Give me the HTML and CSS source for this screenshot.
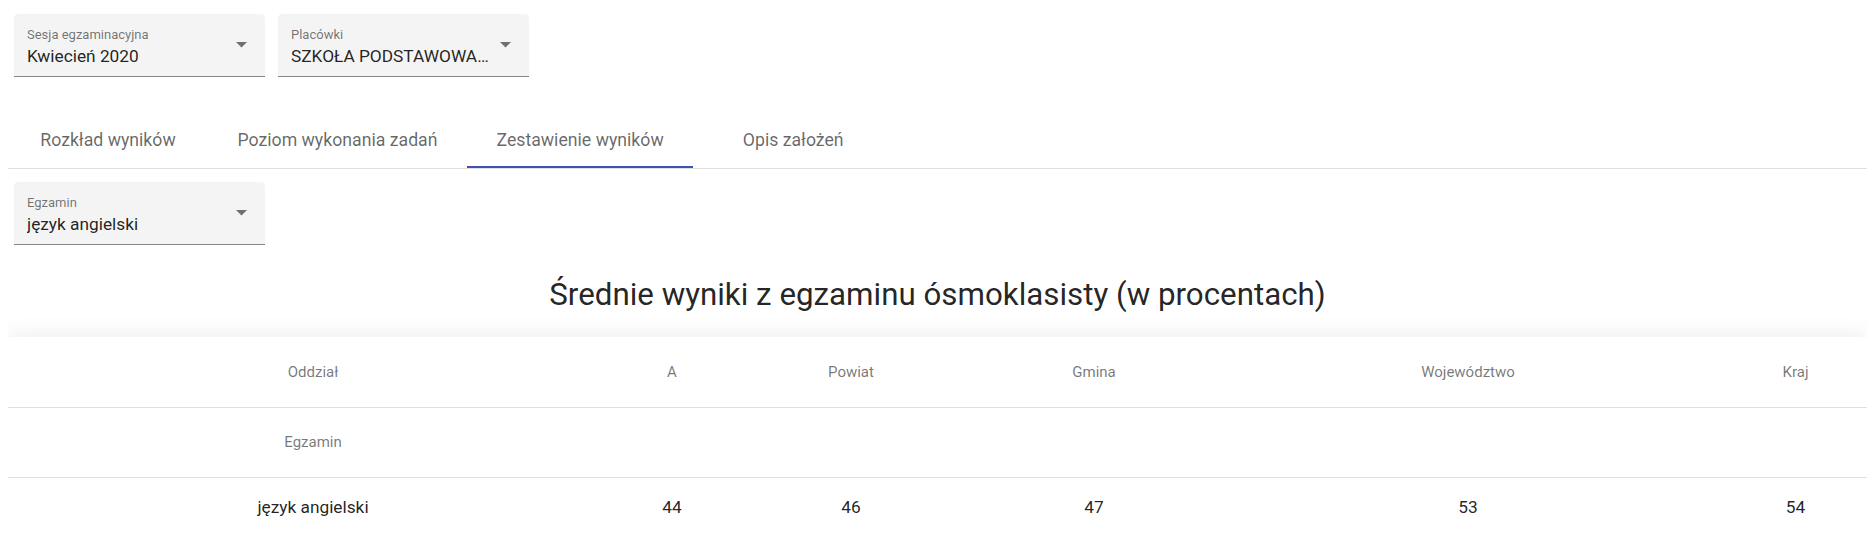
FILE: index.html
```html
<!DOCTYPE html>
<html lang="pl">
<head>
<meta charset="utf-8">
<title>Zestawienie wyników</title>
<link rel="stylesheet" href="styles.css">
</head>
<body>
<div class="page">
  <div class="filters">
    <div class="select">
      <span class="select-label">Sesja egzaminacyjna</span>
      <span class="select-value">Kwiecień 2020</span>
      <svg class="select-arrow" viewBox="7 10 10 5" aria-hidden="true"><path d="M7 10l5 5 5-5z"/></svg>
    </div>
    <div class="select">
      <span class="select-label">Placówki</span>
      <span class="select-value">SZKOŁA PODSTAWOWA NR 1 IM. JANA PAWŁA II</span>
      <svg class="select-arrow" viewBox="7 10 10 5" aria-hidden="true"><path d="M7 10l5 5 5-5z"/></svg>
    </div>
  </div>

  <div class="tabs">
    <div class="tab">Rozkład wyników</div>
    <div class="tab">Poziom wykonania zadań</div>
    <div class="tab tab-active">Zestawienie wyników</div>
    <div class="tab">Opis założeń</div>
  </div>

  <div class="filters filters-exam">
    <div class="select">
      <span class="select-label">Egzamin</span>
      <span class="select-value">język angielski</span>
      <svg class="select-arrow" viewBox="7 10 10 5" aria-hidden="true"><path d="M7 10l5 5 5-5z"/></svg>
    </div>
  </div>

  <h1 class="title">Średnie wyniki z egzaminu ósmoklasisty (w procentach)</h1>

  <div class="card">
    <table class="results">
      <colgroup>
        <col class="c-name"><col class="c-a"><col class="c-powiat"><col class="c-gmina"><col class="c-woj"><col class="c-kraj">
      </colgroup>
      <thead>
        <tr>
          <th>Oddział</th><th>A</th><th>Powiat</th><th>Gmina</th><th>Województwo</th><th>Kraj</th>
        </tr>
        <tr>
          <th>Egzamin</th><th></th><th></th><th></th><th></th><th></th>
        </tr>
      </thead>
      <tbody>
        <tr>
          <td>język angielski</td><td>44</td><td>46</td><td>47</td><td>53</td><td>54</td>
        </tr>
      </tbody>
    </table>
  </div>
</div>
</body>
</html>
```
FILE: styles.css
```css
* { box-sizing: border-box; }

body {
  margin: 8px;
  font-family: Roboto, "Liberation Sans", Arial, sans-serif;
  color: rgba(0, 0, 0, 0.87);
  background: #fff;
}

.filters {
  display: flex;
  gap: 13px;
  padding: 6px 6px 0;
}

.filters-exam {
  padding-top: 13px;
}

.select {
  position: relative;
  width: 251px;
  height: 63px;
  background: rgba(0, 0, 0, 0.045);
  border-radius: 4px 4px 0 0;
  border-bottom: 1px solid rgba(0, 0, 0, 0.45);
  padding: 13px 37px 0 13px;
  display: flex;
  flex-direction: column;
  gap: 3px;
}

.select-label {
  font-size: 13px;
  line-height: 16px;
  color: rgba(0, 0, 0, 0.54);
}

.select-value {
  font-size: 17.3px;
  line-height: 20px;
  color: rgba(0, 0, 0, 0.87);
  white-space: nowrap;
  overflow: hidden;
  text-overflow: ellipsis;
}

.select-arrow {
  position: absolute;
  right: 18px;
  top: 28px;
  width: 11px;
  height: 5.5px;
  fill: rgba(0, 0, 0, 0.54);
}

.tabs {
  display: flex;
  margin-top: 35px;
  border-bottom: 1px solid #e0e0e0;
}

.tab {
  position: relative;
  min-width: 200px;
  height: 56px;
  padding: 0 29.5px;
  display: flex;
  align-items: center;
  justify-content: center;
  font-size: 17.7px;
  color: rgba(0, 0, 0, 0.6);
  white-space: nowrap;
}

.tab-active::after {
  content: "";
  position: absolute;
  left: 0;
  right: 0;
  bottom: 0;
  height: 2px;
  background: #3f51b5;
}

.title {
  margin: 32px 0 0;
  font-size: 31.3px;
  line-height: 36px;
  font-weight: 400;
  text-align: center;
  color: rgba(0, 0, 0, 0.87);
}

.card {
  margin-top: 24px;
  background: #fff;
  box-shadow: 0 -3px 20px rgba(0, 0, 0, 0.07);
}

.results {
  width: 100%;
  border-collapse: collapse;
  table-layout: fixed;
}

.c-name { width: 610px; }
.c-a { width: 108px; }
.c-powiat { width: 250px; }
.c-gmina { width: 236px; }
.c-woj { width: 512px; }
.c-kraj { width: auto; }

.results th {
  height: 70px;
  font-size: 15px;
  font-weight: 400;
  color: rgba(0, 0, 0, 0.54);
  text-align: center;
  border-bottom: 1px solid #e0e0e0;
  padding: 0 8px;
}

.results td {
  height: 60px;
  font-size: 17.3px;
  color: rgba(0, 0, 0, 0.87);
  text-align: center;
  border-bottom: 1px solid #e0e0e0;
  padding: 0 8px;
}
```
